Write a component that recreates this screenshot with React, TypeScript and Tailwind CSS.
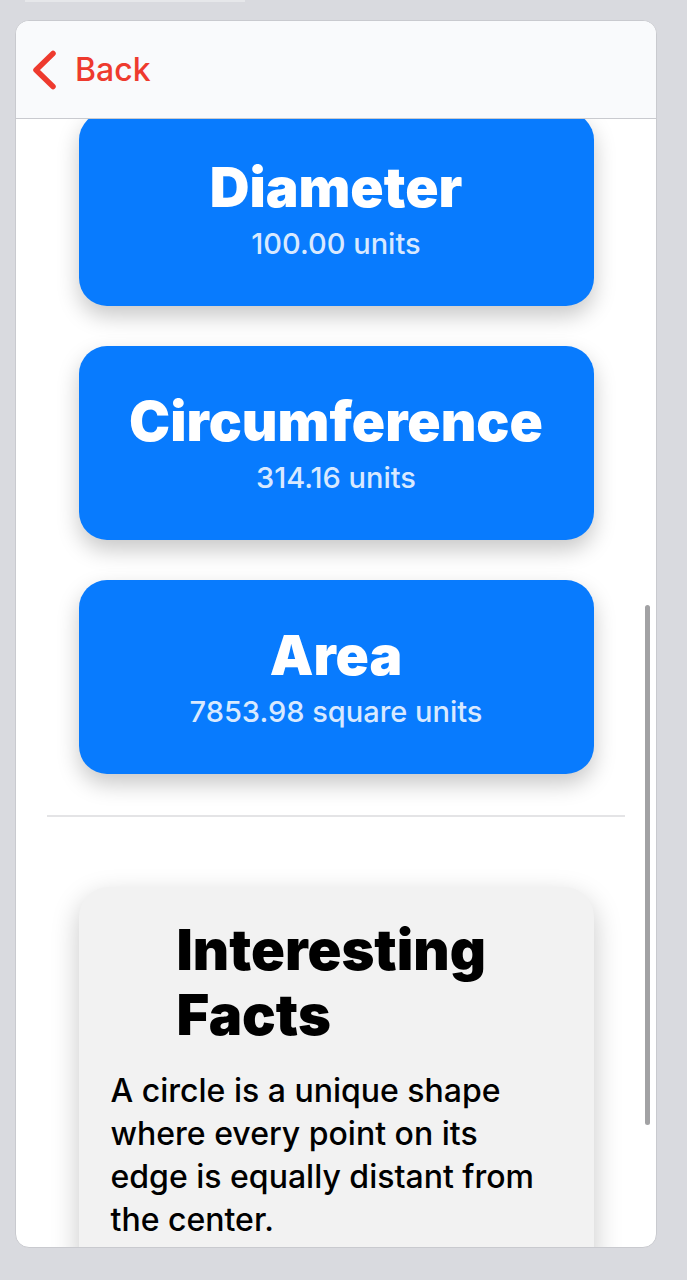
const stats = [
  { title: 'Diameter', value: '100.00 units' },
  { title: 'Circumference', value: '314.16 units' },
  { title: 'Area', value: '7853.98 square units' },
];

export default function App() {
  return (
    <div className="w-[687px] h-[1280px] bg-[#d9dadf] pt-5 px-[15px] relative overflow-hidden" style={{ fontFamily: 'Inter, "Noto Sans", sans-serif' }}>
      <div className="absolute top-0 left-[25px] w-[220px] h-[2px] bg-[#e6e7ea]" />
      <div className="w-[642px] h-[1228px] bg-white rounded-[14px] border border-[#c9cacf] overflow-hidden flex flex-col">
        <div className="h-[98px] shrink-0 bg-[#f9fafc] border-b border-[#c9cacf] flex items-center pl-[14px]">
          <svg width="30" height="42" viewBox="0 0 30 42" fill="none" className="shrink-0 mt-[1px]">
            <path d="M23 4.5 L6 21 L23 37.5" stroke="#ee3a2e" strokeWidth="5.5" strokeLinecap="round" strokeLinejoin="round" />
          </svg>
          <span className="text-[32px] text-[#ee3a2e] font-medium ml-[15px] leading-none">Back</span>
        </div>

        <div className="flex-1 relative overflow-hidden">
          <div className="flex flex-col items-center mt-[-7px]">
            {stats.map((s, i) => (
              <div
                key={i}
                className="w-[515px] h-[194px] bg-[#087bfe] rounded-[28px] flex flex-col items-center justify-center mb-[40px] shadow-[0_10px_22px_rgba(0,0,0,0.22)]"
              >
                <div className="text-white text-[55px] font-black leading-[62px]">{s.title}</div>
                <div className="text-[#d8e9ff] text-[29px] font-medium leading-[36px] mt-[8px]">{s.value}</div>
              </div>
            ))}
            <div className="w-[578px] h-[2px] bg-[#e4e4e6] mt-[1px]" />

            <div className="w-[515px] mt-[70px] bg-[#f2f2f2] rounded-[30px] shadow-[0_10px_28px_rgba(0,0,0,0.22)] pl-[32px] pr-[40px] pt-[31px] pb-[40px]">
              <h2 className="w-fit ml-[66px] text-left text-[56px] font-black leading-[65px] text-black">
                Interesting
                <br />
                Facts
              </h2>
              <p className="mt-[21px] text-[32px] font-medium leading-[43px] text-black">
                A circle is a unique shape where every point on its edge is equally distant from the center.
              </p>
            </div>
          </div>
          <div className="absolute right-[6px] top-[486px] w-[5px] h-[520px] rounded-full bg-[#a2a2a4]" />
        </div>
      </div>
    </div>
  );
}
